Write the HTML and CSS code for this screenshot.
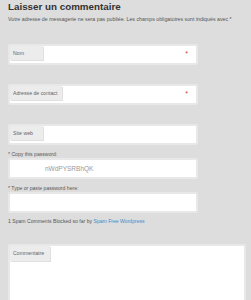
FILE: index.html
```html
<!DOCTYPE html>
<html>
<head>
  <title>Laisser un commentaire</title>
  <meta name="viewport" content="width=device-width, initial-scale=1">
  <link rel="stylesheet" href="styles.css">
</head>
<body>
  <div id="respond">
    <h3 class="reply-title">Laisser un commentaire</h3>
    <p class="notes">Votre adresse de messagerie ne sera pas publiée. Les champs obligatoires sont indiqués avec *</p>

    <!-- Author fields -->
    <div class="field field-first">
      <div class="field-inner">
        <label class="field-label">Nom</label>
        <span class="required">*</span>
      </div>
    </div>
    <div class="field">
      <div class="field-inner">
        <label class="field-label">Adresse de contact</label>
        <span class="required">*</span>
      </div>
    </div>
    <div class="field">
      <div class="field-inner">
        <label class="field-label">Site web</label>
      </div>
    </div>

    <!-- Spam Free Wordpress password -->
    <p class="pw-label">* Copy this password:</p>
    <div class="field field-pw">
      <div class="field-inner">
        <span class="pw-value">nWdPYSRBhQK</span>
      </div>
    </div>
    <p class="pw-label">* Type or paste password here:</p>
    <div class="field field-pw">
      <div class="field-inner"></div>
    </div>
    <p class="spam-note">1 Spam Comments Blocked so far by <a href="#">Spam Free Wordpress</a></p>

    <!-- Comment textarea -->
    <div class="field field-comment">
      <div class="field-inner">
        <label class="field-label">Commentaire</label>
      </div>
    </div>
  </div>
</body>
</html>
```

FILE: styles.css
```css
/* Base */
html, body {
  margin: 0;
  padding: 0;
  background: #dddddd;
  font-family: "Liberation Sans", Arial, sans-serif;
  color: #444;
  overflow: hidden;
}
#respond {
  padding: 1px 8px 0 8px;
}
.reply-title {
  margin: 0;
  font-size: 9.8px;
  line-height: 12px;
  font-weight: bold;
  color: #333;
}
.notes {
  margin: 3px 0 0 0;
  font-size: 5.25px;
  line-height: 6px;
  color: #555;
}
/* Fields */
.field {
  width: 186px;
  padding: 2px;
  margin-top: 19px;
  background: #e8e8e8;
  border-radius: 2px;
}
.field-first {
  margin-top: 22px;
}
.field-inner {
  display: flex;
  align-items: flex-start;
  height: 17px;
  background: #fff;
}
.field-label {
  min-width: 25px;
  height: 14px;
  padding: 0 5px 0 3px;
  background: #ececec;
  box-shadow: 1px 1px 0 #e0e0e0;
  font-size: 5.2px;
  line-height: 14px;
  color: #666;
}
.required {
  margin-left: auto;
  margin-right: 8px;
  font-size: 7px;
  line-height: 16px;
  color: #d0452a;
}
/* Password */
.pw-label {
  margin: 6px 0 0 0;
  font-size: 5.1px;
  line-height: 7px;
  color: #555;
}
.field-pw {
  margin-top: 0;
}
.pw-value {
  padding-left: 35px;
  font-size: 6.5px;
  line-height: 17px;
  color: #999;
}
.spam-note {
  margin: 5px 0 0 0;
  font-size: 5.1px;
  line-height: 6px;
  color: #555;
}
.spam-note a {
  color: #3a8ccc;
  text-decoration: none;
}
/* Comment */
.field-comment {
  width: 234px;
  margin-top: 20px;
  padding-bottom: 0;
  border-radius: 2px 2px 0 0;
}
.field-comment .field-inner {
  height: 80px;
}
.field-comment .field-label {
  min-width: 32px;
  height: 15px;
  line-height: 15px;
}
```
